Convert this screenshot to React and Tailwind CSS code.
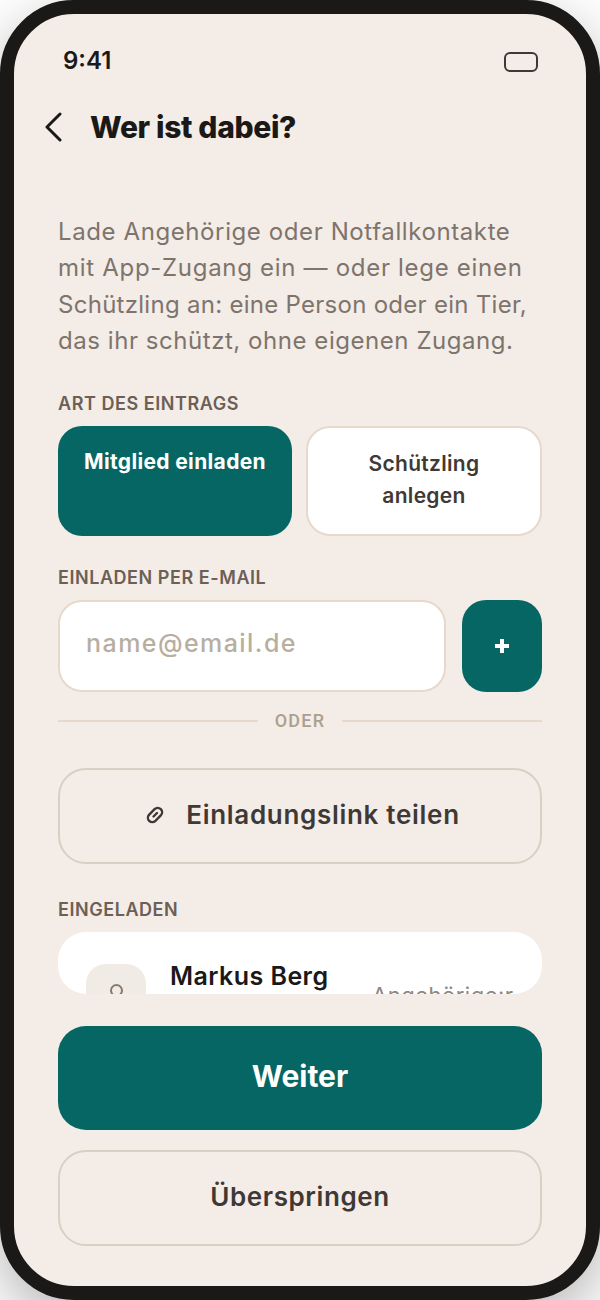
const FONT = "font-['Inter','Noto_Sans',sans-serif]"

function SegmentButton({ active, children }) {
	if (active) {
		return (
			<div className="w-[234px] h-[110px] rounded-[24px] bg-[#066664] text-white text-center pt-[21px] text-[21px] leading-[30px] font-bold tracking-[0.35px]">
				{children}
			</div>
		)
	}
	return (
		<div className="w-[236px] h-[110px] rounded-[24px] bg-white border-2 border-[#e6d9cc] text-[#3f3935] flex items-center justify-center text-center px-[30px] pb-[2px] text-[21px] leading-[32px] font-semibold tracking-[0.3px]">
			{children}
		</div>
	)
}

function Label({ children, className }) {
	return <div className={`text-[18px] leading-[26px] font-semibold uppercase tracking-[0.55px] text-[#6b5f56] ${className}`}>{children}</div>
}

export default function App() {
	return (
		<div className={`w-[600px] h-[1300px] overflow-hidden bg-white ${FONT}`}>
			<div className="w-[600px] h-[1300px] rounded-[74px] border-[14px] border-[#1a1917] bg-[#f4ece6] shadow-[0_20px_60px_rgba(0,0,0,0.3)] overflow-hidden flex flex-col">
				{/* Statusleiste */}
				<div className="h-[66px] shrink-0 flex items-start justify-between pl-[49px] pr-[48px] pt-[30px]">
					<span className="text-[24px] leading-[34px] font-semibold text-[#1a1917]">9:41</span>
					<div className="w-[34px] h-[20px] mt-[8px] rounded-[6px] border-2 border-[#3f3935]" />
				</div>

				{/* Kopfzeile */}
				<div className="h-[64px] mt-[15px] shrink-0 flex items-center pl-[30px]">
					<svg width="18" height="30" viewBox="0 0 18 30" fill="none" stroke="#1a1917" strokeWidth="3" strokeLinecap="round" strokeLinejoin="round">
						<path d="M16 2 L3 15 L16 28" />
					</svg>
					<h1 className="ml-[28px] text-[30px] leading-[36px] font-extrabold text-[#1a1917] tracking-[-0.35px]">Wer ist dabei?</h1>
				</div>

				{/* Inhalt */}
				<div className="flex-1 min-h-0 overflow-hidden px-[44px] flex flex-col">
					<p className="mt-[55px] text-[24px] leading-[36.4px] text-[#7d746d] whitespace-nowrap">
						<span className="tracking-[0.6px]">Lade Angehörige oder Notfallkontakte</span><br />
						<span className="tracking-[0.7px]">mit App-Zugang ein — oder lege einen</span><br />
						<span className="tracking-[0.28px]">Schützling an: eine Person oder ein Tier,</span><br />
						<span className="tracking-[0.55px]">das ihr schützt, ohne eigenen Zugang.</span>
					</p>

					<Label className="mt-[31px]">Art des Eintrags</Label>
					<div className="mt-[9px] flex gap-[14px]">
						<SegmentButton active>Mitglied einladen</SegmentButton>
						<SegmentButton>Schützling anlegen</SegmentButton>
					</div>

					<Label className="mt-[29px]">Einladen per E-Mail</Label>
					<div className="mt-[9px] flex gap-[16px]">
						<div className="flex-1 h-[92px] rounded-[24px] bg-white border-2 border-[#e6d9cc] flex items-center pl-[26px] pb-1 text-[25px] font-medium text-[#b8aea0] tracking-[1.45px]">
							name@email.de
						</div>
						<div className="w-[80px] h-[92px] rounded-[24px] bg-[#066664] flex items-center justify-center">
							<svg width="14" height="14" viewBox="0 0 14 14" fill="#ffffff">
								<path d="M5 0h4v5h5v4H9v5H5V9H0V5h5z" />
							</svg>
						</div>
					</div>

					<div className="mt-[15px] h-[28px] flex items-center">
						<div className="flex-1 h-[2px] bg-[#e6d9cc]" />
						<span className="w-[84px] text-center text-[18px] font-medium tracking-[1.2px] text-[#ab9f90] font-['Roboto',sans-serif]">ODER</span>
						<div className="flex-1 h-[2px] bg-[#e6d9cc]" />
					</div>

					<div className="mt-[33px] h-[96px] shrink-0 rounded-[28px] border-2 border-[#d9cfc4] flex items-center justify-center gap-[22px] pl-[6px] pb-[2px] text-[26px] font-semibold text-[#3f3935] tracking-[0.7px]">
						<svg width="18" height="18" viewBox="0 0 18 18" fill="none" stroke="#3f3935" strokeWidth="2.4" strokeLinecap="round">
							<rect x="0.8" y="4.6" width="16.4" height="8.8" rx="4.4" transform="rotate(-45 9 9)" />
							<path d="M7.5 10.5 L11 7" />
						</svg>
						<span>Einladungslink teilen</span>
					</div>

					<Label className="mt-[33px]">Eingeladen</Label>
					<div className="mt-[9px] h-[62px] shrink-0 rounded-[28px] bg-white overflow-hidden flex pl-[28px] pt-[32px]">
						<div className="w-[60px] h-[60px] shrink-0 rounded-[20px] bg-[#f0ece5] flex justify-center pt-[19px]">
							<svg width="15" height="15" viewBox="0 0 15 15" fill="none" stroke="#8a7a6c" strokeWidth="2">
								<circle cx="7.5" cy="7.5" r="5.5" />
							</svg>
						</div>
						<div className="ml-[24px] mt-[-6px] w-[202px] text-[25px] leading-[36px] font-semibold text-[#1a1917] tracking-[0.45px] shrink-0">Markus Berg</div>
						<div className="mt-[16px] text-[22px] leading-[30px] text-[#8e8680] tracking-[0.5px] whitespace-nowrap">Angehörige:r</div>
					</div>
				</div>

				{/* Buttons unten */}
				<div className="shrink-0 px-[44px] pt-[32px] pb-[40px] flex flex-col gap-[20px]">
					<div className="h-[104px] rounded-[28px] bg-[#066664] flex items-center justify-center pb-1 text-[30px] font-bold text-white">Weiter</div>
					<div className="h-[96px] rounded-[28px] border-2 border-[#d9cfc4] flex items-center justify-center pb-1 text-[26px] font-semibold text-[#3f3935] tracking-[0.6px]">Überspringen</div>
				</div>
			</div>
		</div>
	)
}
